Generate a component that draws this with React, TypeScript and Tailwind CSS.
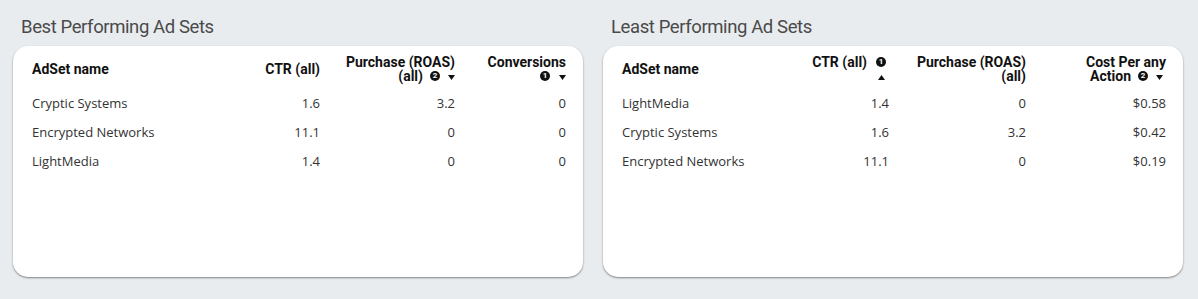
import React from 'react';

type Col = { label: React.ReactNode; width: string; align: 'left' | 'right' };

const Badge = ({ n }: { n: 1 | 2 }) => (
  <span
    className="inline-flex items-center justify-center align-middle w-[10px] h-[10px] rounded-full bg-[#111] text-white text-[8px] leading-none font-bold -mt-[2px]"
    style={{ fontFamily: 'Roboto, sans-serif' }}
  >
    {n}
  </span>
);

const Caret = ({ up }: { up?: boolean }) => (
  <svg width="7" height="5" viewBox="0 0 7 5" className="inline-block align-middle">
    <path d={up ? 'M0 5 L3.5 0 L7 5 Z' : 'M0 0 L7 0 L3.5 5 Z'} fill="#111" />
  </svg>
);

interface AdTableProps {
  title: string;
  cardWidth: string;
  cols: Col[];
  rows: string[][];
}

function AdTable({ title, cardWidth, cols, rows }: AdTableProps) {
  return (
    <div className={cardWidth}>
      <h2 className="pl-2 text-[18.5px] leading-[22px] text-[#4a4a4a] tracking-[-0.4px] mb-[8px]" style={{ fontFamily: 'Roboto, sans-serif' }}>
        {title}
      </h2>
      <div className="bg-white rounded-[15px] h-[231px] pt-[3px] pl-[19px] pr-[17px] shadow-[0_1px_2px_rgba(0,0,0,0.45)]">
        <table className="w-full table-fixed border-collapse">
          <colgroup>
            {cols.map((c, i) => (
              <col key={i} className={c.width} />
            ))}
          </colgroup>
          <thead>
            <tr className="h-[40px]">
              {cols.map((c, i) => (
                <th
                  key={i}
                  className={`${c.align === 'left' ? 'text-left' : 'text-right'} align-middle font-bold text-[14px] leading-[14px] text-[#111] py-[5px]`}
                  style={{ fontFamily: 'Roboto, sans-serif' }}
                >
                  {c.label}
                </th>
              ))}
            </tr>
          </thead>
          <tbody>
            {rows.map((r, ri) => (
              <tr key={ri} className="h-[29px]">
                {r.map((v, ci) => (
                  <td
                    key={ci}
                    className={`${cols[ci].align === 'left' ? 'text-left' : 'text-right'} text-[13px] text-[#333] align-middle`}
                    style={{ fontFamily: '"Open Sans", sans-serif' }}
                  >
                    {v}
                  </td>
                ))}
              </tr>
            ))}
          </tbody>
        </table>
      </div>
    </div>
  );
}

export default function App() {
  const bestCols: Col[] = [
    { label: 'AdSet name', width: 'w-[198px]', align: 'left' },
    { label: 'CTR (all)', width: 'w-[90px]', align: 'right' },
    {
      label: (
        <>
          Purchase (ROAS)
          <br />
          (all)<span className="ml-[7px]"><Badge n={2} /></span>
          <span className="ml-[8px]"><Caret /></span>
        </>
      ),
      width: 'w-[135px]',
      align: 'right',
    },
    {
      label: (
        <>
          Conversions
          <br />
          <Badge n={1} />
          <span className="ml-[9px]"><Caret /></span>
        </>
      ),
      width: 'w-[111px]',
      align: 'right',
    },
  ];

  const leastCols: Col[] = [
    { label: 'AdSet name', width: 'w-[180px]', align: 'left' },
    {
      label: (
        <>
          CTR (all)<span className="ml-[9px]"><Badge n={1} /></span>
          <span className="inline-block w-[3px]" />
          <br />
          <Caret up />
          <span className="inline-block w-[4px]" />
        </>
      ),
      width: 'w-[87px]',
      align: 'right',
    },
    {
      label: (
        <>
          Purchase (ROAS)
          <br />
          (all)
        </>
      ),
      width: 'w-[137px]',
      align: 'right',
    },
    {
      label: (
        <>
          Cost Per any
          <br />
          Action<span className="ml-[7px]"><Badge n={2} /></span>
          <span className="ml-[8px]"><Caret /></span>
          <span className="inline-block w-[3px]" />
        </>
      ),
      width: 'w-[140px]',
      align: 'right',
    },
  ];

  return (
    <div className="w-[1198px] h-[299px] bg-[#e9ecef] flex gap-5 pl-[13px] pt-[16px]">
      <AdTable
        title="Best Performing Ad Sets"
        cardWidth="w-[570px]"
        cols={bestCols}
        rows={[
          ['Cryptic Systems', '1.6', '3.2', '0'],
          ['Encrypted Networks', '11.1', '0', '0'],
          ['LightMedia', '1.4', '0', '0'],
        ]}
      />
      <AdTable
        title="Least Performing Ad Sets"
        cardWidth="w-[580px]"
        cols={leastCols}
        rows={[
          ['LightMedia', '1.4', '0', '$0.58'],
          ['Cryptic Systems', '1.6', '3.2', '$0.42'],
          ['Encrypted Networks', '11.1', '0', '$0.19'],
        ]}
      />
    </div>
  );
}
